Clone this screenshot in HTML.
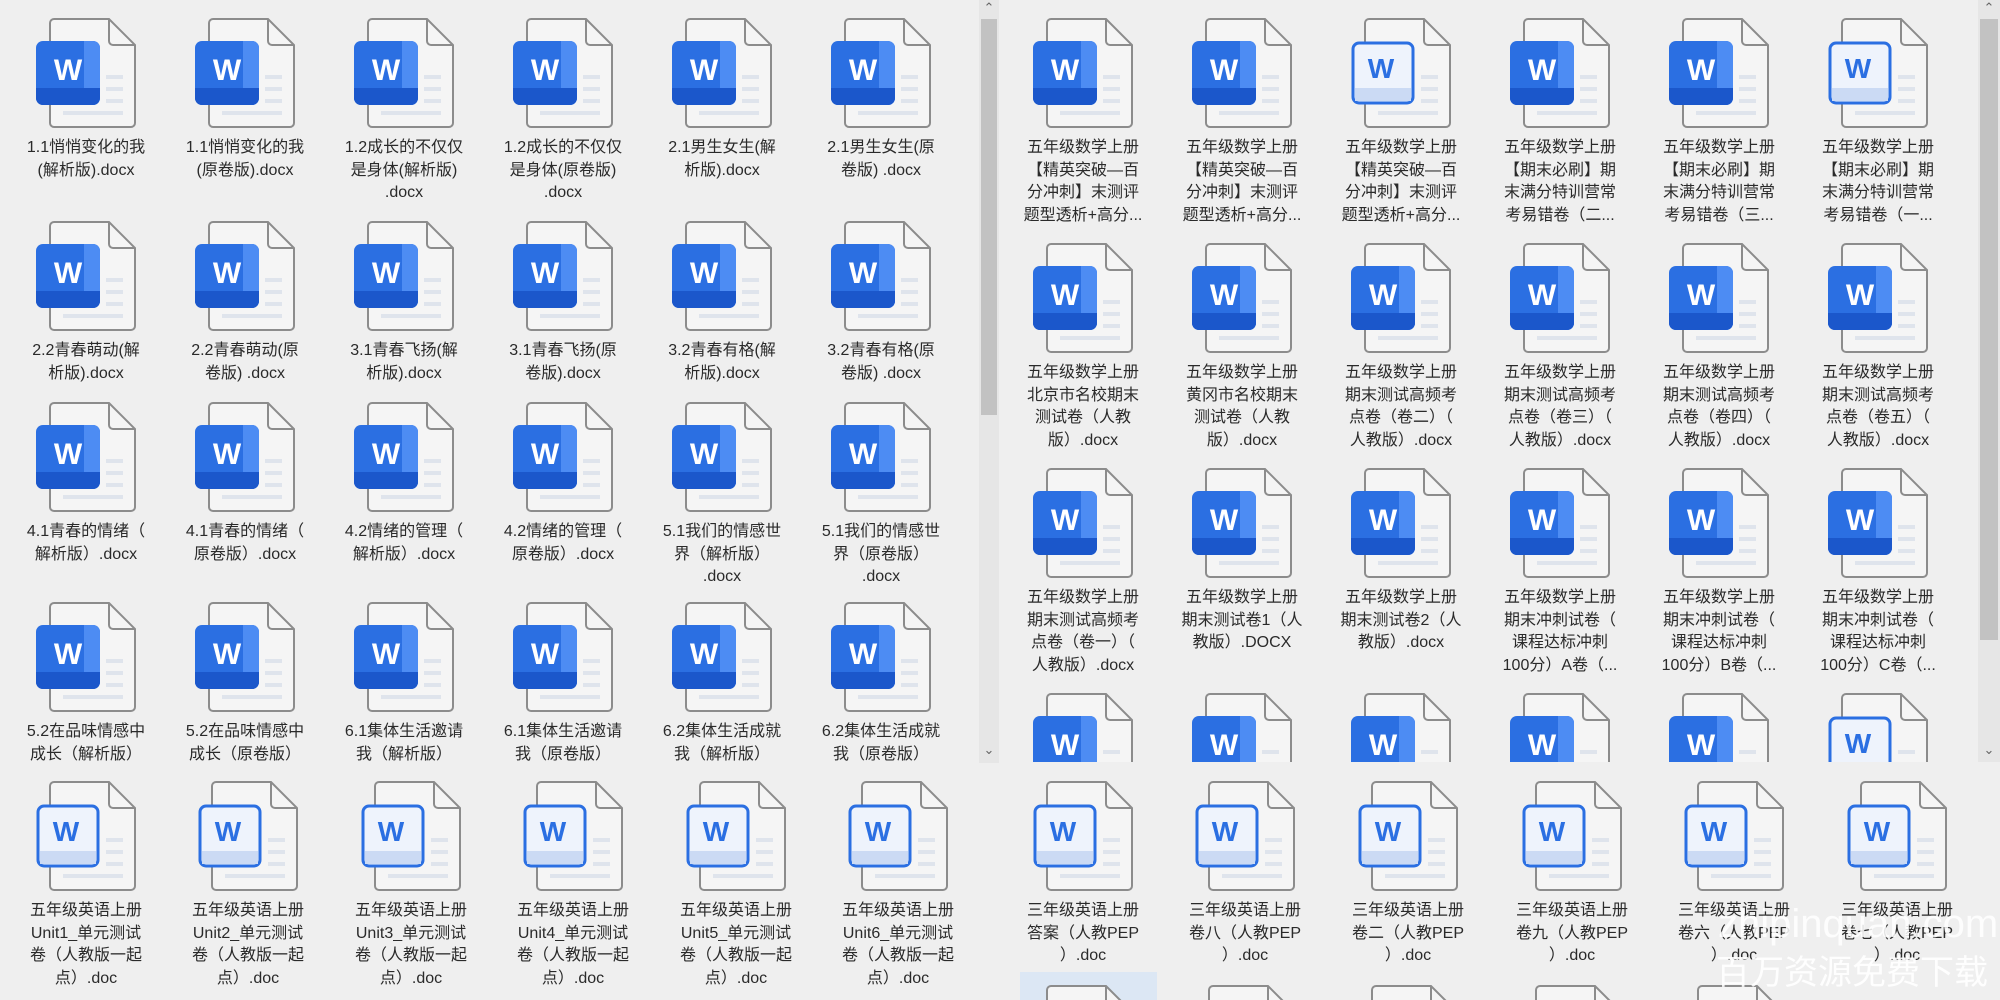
<!DOCTYPE html>
<html><head><meta charset="utf-8">
<style>
*{margin:0;padding:0;box-sizing:border-box}
html,body{width:2000px;height:1000px;overflow:hidden;background:#efefef;font-family:"Liberation Sans","Noto Sans CJK SC",sans-serif}
.c{position:absolute;overflow:hidden;background:#efefef}
.it{position:absolute;width:156px;height:230px}
.it svg{position:absolute;left:28px;top:0;width:100px;height:110px}
.t{position:absolute;left:-4px;top:119px;width:164px;text-align:center;font-size:16px;line-height:22.5px;color:#2a2a2a;white-space:nowrap}
.sb{position:absolute;background:#e6e6e6}
.th{position:absolute;background:#c2c2c2}
.ar{position:absolute;font-size:13px;color:#666;width:20px;text-align:center}
</style></head><body>
<svg width="0" height="0" style="position:absolute">
<defs>
<symbol id="pg" viewBox="0 0 100 110">
<path d="M18 1H73L99 27V105a4 4 0 0 1-4 4H18a4 4 0 0 1-4-4V5a4 4 0 0 1 4-4z" fill="#f5f5f5" stroke="#8c8c8c" stroke-width="2"/>
<path d="M73 1V23a4 4 0 0 0 4 4H99" fill="none" stroke="#8c8c8c" stroke-width="2"/>
<rect x="70" y="57" width="17" height="4" fill="#dfe4ec"/>
<rect x="70" y="69" width="17" height="4" fill="#dfe4ec"/>
<rect x="70" y="81" width="17" height="4" fill="#dfe4ec"/>
<rect x="27" y="93" width="60" height="4" fill="#dfe4ec"/>
</symbol>
<clipPath id="cl"><rect x="0" y="23" width="64" height="64" rx="7"/></clipPath>
</defs></svg>

<!-- top-left -->
<div class="c" style="left:0;top:0;width:979px;height:763px">
<div class="it" style="left:8px;top:18px"><svg><use href="#pg"/><g clip-path="url(#cl)"><rect x="0" y="23" width="64" height="64" fill="#2b6fe2"/><rect x="48" y="23" width="16" height="64" fill="#4d8cf3"/><rect x="0" y="70" width="64" height="17" fill="#1b57cb"/></g><text x="32" y="62" font-size="30" font-weight="bold" fill="#fff" text-anchor="middle" font-family="Liberation Sans">W</text></svg><div class="t">1.1悄悄变化的我<br>(解析版).docx</div></div>
<div class="it" style="left:167px;top:18px"><svg><use href="#pg"/><g clip-path="url(#cl)"><rect x="0" y="23" width="64" height="64" fill="#2b6fe2"/><rect x="48" y="23" width="16" height="64" fill="#4d8cf3"/><rect x="0" y="70" width="64" height="17" fill="#1b57cb"/></g><text x="32" y="62" font-size="30" font-weight="bold" fill="#fff" text-anchor="middle" font-family="Liberation Sans">W</text></svg><div class="t">1.1悄悄变化的我<br>(原卷版).docx</div></div>
<div class="it" style="left:326px;top:18px"><svg><use href="#pg"/><g clip-path="url(#cl)"><rect x="0" y="23" width="64" height="64" fill="#2b6fe2"/><rect x="48" y="23" width="16" height="64" fill="#4d8cf3"/><rect x="0" y="70" width="64" height="17" fill="#1b57cb"/></g><text x="32" y="62" font-size="30" font-weight="bold" fill="#fff" text-anchor="middle" font-family="Liberation Sans">W</text></svg><div class="t">1.2成长的不仅仅<br>是身体(解析版)<br>.docx</div></div>
<div class="it" style="left:485px;top:18px"><svg><use href="#pg"/><g clip-path="url(#cl)"><rect x="0" y="23" width="64" height="64" fill="#2b6fe2"/><rect x="48" y="23" width="16" height="64" fill="#4d8cf3"/><rect x="0" y="70" width="64" height="17" fill="#1b57cb"/></g><text x="32" y="62" font-size="30" font-weight="bold" fill="#fff" text-anchor="middle" font-family="Liberation Sans">W</text></svg><div class="t">1.2成长的不仅仅<br>是身体(原卷版)<br>.docx</div></div>
<div class="it" style="left:644px;top:18px"><svg><use href="#pg"/><g clip-path="url(#cl)"><rect x="0" y="23" width="64" height="64" fill="#2b6fe2"/><rect x="48" y="23" width="16" height="64" fill="#4d8cf3"/><rect x="0" y="70" width="64" height="17" fill="#1b57cb"/></g><text x="32" y="62" font-size="30" font-weight="bold" fill="#fff" text-anchor="middle" font-family="Liberation Sans">W</text></svg><div class="t">2.1男生女生(解<br>析版).docx</div></div>
<div class="it" style="left:803px;top:18px"><svg><use href="#pg"/><g clip-path="url(#cl)"><rect x="0" y="23" width="64" height="64" fill="#2b6fe2"/><rect x="48" y="23" width="16" height="64" fill="#4d8cf3"/><rect x="0" y="70" width="64" height="17" fill="#1b57cb"/></g><text x="32" y="62" font-size="30" font-weight="bold" fill="#fff" text-anchor="middle" font-family="Liberation Sans">W</text></svg><div class="t">2.1男生女生(原<br>卷版) .docx</div></div>

<div class="it" style="left:8px;top:221px"><svg><use href="#pg"/><g clip-path="url(#cl)"><rect x="0" y="23" width="64" height="64" fill="#2b6fe2"/><rect x="48" y="23" width="16" height="64" fill="#4d8cf3"/><rect x="0" y="70" width="64" height="17" fill="#1b57cb"/></g><text x="32" y="62" font-size="30" font-weight="bold" fill="#fff" text-anchor="middle" font-family="Liberation Sans">W</text></svg><div class="t">2.2青春萌动(解<br>析版).docx</div></div>
<div class="it" style="left:167px;top:221px"><svg><use href="#pg"/><g clip-path="url(#cl)"><rect x="0" y="23" width="64" height="64" fill="#2b6fe2"/><rect x="48" y="23" width="16" height="64" fill="#4d8cf3"/><rect x="0" y="70" width="64" height="17" fill="#1b57cb"/></g><text x="32" y="62" font-size="30" font-weight="bold" fill="#fff" text-anchor="middle" font-family="Liberation Sans">W</text></svg><div class="t">2.2青春萌动(原<br>卷版) .docx</div></div>
<div class="it" style="left:326px;top:221px"><svg><use href="#pg"/><g clip-path="url(#cl)"><rect x="0" y="23" width="64" height="64" fill="#2b6fe2"/><rect x="48" y="23" width="16" height="64" fill="#4d8cf3"/><rect x="0" y="70" width="64" height="17" fill="#1b57cb"/></g><text x="32" y="62" font-size="30" font-weight="bold" fill="#fff" text-anchor="middle" font-family="Liberation Sans">W</text></svg><div class="t">3.1青春飞扬(解<br>析版).docx</div></div>
<div class="it" style="left:485px;top:221px"><svg><use href="#pg"/><g clip-path="url(#cl)"><rect x="0" y="23" width="64" height="64" fill="#2b6fe2"/><rect x="48" y="23" width="16" height="64" fill="#4d8cf3"/><rect x="0" y="70" width="64" height="17" fill="#1b57cb"/></g><text x="32" y="62" font-size="30" font-weight="bold" fill="#fff" text-anchor="middle" font-family="Liberation Sans">W</text></svg><div class="t">3.1青春飞扬(原<br>卷版).docx</div></div>
<div class="it" style="left:644px;top:221px"><svg><use href="#pg"/><g clip-path="url(#cl)"><rect x="0" y="23" width="64" height="64" fill="#2b6fe2"/><rect x="48" y="23" width="16" height="64" fill="#4d8cf3"/><rect x="0" y="70" width="64" height="17" fill="#1b57cb"/></g><text x="32" y="62" font-size="30" font-weight="bold" fill="#fff" text-anchor="middle" font-family="Liberation Sans">W</text></svg><div class="t">3.2青春有格(解<br>析版).docx</div></div>
<div class="it" style="left:803px;top:221px"><svg><use href="#pg"/><g clip-path="url(#cl)"><rect x="0" y="23" width="64" height="64" fill="#2b6fe2"/><rect x="48" y="23" width="16" height="64" fill="#4d8cf3"/><rect x="0" y="70" width="64" height="17" fill="#1b57cb"/></g><text x="32" y="62" font-size="30" font-weight="bold" fill="#fff" text-anchor="middle" font-family="Liberation Sans">W</text></svg><div class="t">3.2青春有格(原<br>卷版) .docx</div></div>

<div class="it" style="left:8px;top:402px"><svg><use href="#pg"/><g clip-path="url(#cl)"><rect x="0" y="23" width="64" height="64" fill="#2b6fe2"/><rect x="48" y="23" width="16" height="64" fill="#4d8cf3"/><rect x="0" y="70" width="64" height="17" fill="#1b57cb"/></g><text x="32" y="62" font-size="30" font-weight="bold" fill="#fff" text-anchor="middle" font-family="Liberation Sans">W</text></svg><div class="t">4.1青春的情绪（<br>解析版）.docx</div></div>
<div class="it" style="left:167px;top:402px"><svg><use href="#pg"/><g clip-path="url(#cl)"><rect x="0" y="23" width="64" height="64" fill="#2b6fe2"/><rect x="48" y="23" width="16" height="64" fill="#4d8cf3"/><rect x="0" y="70" width="64" height="17" fill="#1b57cb"/></g><text x="32" y="62" font-size="30" font-weight="bold" fill="#fff" text-anchor="middle" font-family="Liberation Sans">W</text></svg><div class="t">4.1青春的情绪（<br>原卷版）.docx</div></div>
<div class="it" style="left:326px;top:402px"><svg><use href="#pg"/><g clip-path="url(#cl)"><rect x="0" y="23" width="64" height="64" fill="#2b6fe2"/><rect x="48" y="23" width="16" height="64" fill="#4d8cf3"/><rect x="0" y="70" width="64" height="17" fill="#1b57cb"/></g><text x="32" y="62" font-size="30" font-weight="bold" fill="#fff" text-anchor="middle" font-family="Liberation Sans">W</text></svg><div class="t">4.2情绪的管理（<br>解析版）.docx</div></div>
<div class="it" style="left:485px;top:402px"><svg><use href="#pg"/><g clip-path="url(#cl)"><rect x="0" y="23" width="64" height="64" fill="#2b6fe2"/><rect x="48" y="23" width="16" height="64" fill="#4d8cf3"/><rect x="0" y="70" width="64" height="17" fill="#1b57cb"/></g><text x="32" y="62" font-size="30" font-weight="bold" fill="#fff" text-anchor="middle" font-family="Liberation Sans">W</text></svg><div class="t">4.2情绪的管理（<br>原卷版）.docx</div></div>
<div class="it" style="left:644px;top:402px"><svg><use href="#pg"/><g clip-path="url(#cl)"><rect x="0" y="23" width="64" height="64" fill="#2b6fe2"/><rect x="48" y="23" width="16" height="64" fill="#4d8cf3"/><rect x="0" y="70" width="64" height="17" fill="#1b57cb"/></g><text x="32" y="62" font-size="30" font-weight="bold" fill="#fff" text-anchor="middle" font-family="Liberation Sans">W</text></svg><div class="t">5.1我们的情感世<br>界（解析版）<br>.docx</div></div>
<div class="it" style="left:803px;top:402px"><svg><use href="#pg"/><g clip-path="url(#cl)"><rect x="0" y="23" width="64" height="64" fill="#2b6fe2"/><rect x="48" y="23" width="16" height="64" fill="#4d8cf3"/><rect x="0" y="70" width="64" height="17" fill="#1b57cb"/></g><text x="32" y="62" font-size="30" font-weight="bold" fill="#fff" text-anchor="middle" font-family="Liberation Sans">W</text></svg><div class="t">5.1我们的情感世<br>界（原卷版）<br>.docx</div></div>

<div class="it" style="left:8px;top:602px"><svg><use href="#pg"/><g clip-path="url(#cl)"><rect x="0" y="23" width="64" height="64" fill="#2b6fe2"/><rect x="48" y="23" width="16" height="64" fill="#4d8cf3"/><rect x="0" y="70" width="64" height="17" fill="#1b57cb"/></g><text x="32" y="62" font-size="30" font-weight="bold" fill="#fff" text-anchor="middle" font-family="Liberation Sans">W</text></svg><div class="t">5.2在品味情感中<br>成长（解析版）</div></div>
<div class="it" style="left:167px;top:602px"><svg><use href="#pg"/><g clip-path="url(#cl)"><rect x="0" y="23" width="64" height="64" fill="#2b6fe2"/><rect x="48" y="23" width="16" height="64" fill="#4d8cf3"/><rect x="0" y="70" width="64" height="17" fill="#1b57cb"/></g><text x="32" y="62" font-size="30" font-weight="bold" fill="#fff" text-anchor="middle" font-family="Liberation Sans">W</text></svg><div class="t">5.2在品味情感中<br>成长（原卷版）</div></div>
<div class="it" style="left:326px;top:602px"><svg><use href="#pg"/><g clip-path="url(#cl)"><rect x="0" y="23" width="64" height="64" fill="#2b6fe2"/><rect x="48" y="23" width="16" height="64" fill="#4d8cf3"/><rect x="0" y="70" width="64" height="17" fill="#1b57cb"/></g><text x="32" y="62" font-size="30" font-weight="bold" fill="#fff" text-anchor="middle" font-family="Liberation Sans">W</text></svg><div class="t">6.1集体生活邀请<br>我（解析版）</div></div>
<div class="it" style="left:485px;top:602px"><svg><use href="#pg"/><g clip-path="url(#cl)"><rect x="0" y="23" width="64" height="64" fill="#2b6fe2"/><rect x="48" y="23" width="16" height="64" fill="#4d8cf3"/><rect x="0" y="70" width="64" height="17" fill="#1b57cb"/></g><text x="32" y="62" font-size="30" font-weight="bold" fill="#fff" text-anchor="middle" font-family="Liberation Sans">W</text></svg><div class="t">6.1集体生活邀请<br>我（原卷版）</div></div>
<div class="it" style="left:644px;top:602px"><svg><use href="#pg"/><g clip-path="url(#cl)"><rect x="0" y="23" width="64" height="64" fill="#2b6fe2"/><rect x="48" y="23" width="16" height="64" fill="#4d8cf3"/><rect x="0" y="70" width="64" height="17" fill="#1b57cb"/></g><text x="32" y="62" font-size="30" font-weight="bold" fill="#fff" text-anchor="middle" font-family="Liberation Sans">W</text></svg><div class="t">6.2集体生活成就<br>我（解析版）</div></div>
<div class="it" style="left:803px;top:602px"><svg><use href="#pg"/><g clip-path="url(#cl)"><rect x="0" y="23" width="64" height="64" fill="#2b6fe2"/><rect x="48" y="23" width="16" height="64" fill="#4d8cf3"/><rect x="0" y="70" width="64" height="17" fill="#1b57cb"/></g><text x="32" y="62" font-size="30" font-weight="bold" fill="#fff" text-anchor="middle" font-family="Liberation Sans">W</text></svg><div class="t">6.2集体生活成就<br>我（原卷版）</div></div>
</div>
<div class="sb" style="left:979px;top:0;width:20px;height:763px"></div>
<div class="th" style="left:981px;top:19px;width:16px;height:396px"></div>
<div class="ar" style="left:979px;top:0">&#8963;</div>
<div class="ar" style="left:979px;top:742px">&#8964;</div>

<!-- top-right -->
<div class="c" style="left:1000px;top:0;width:978px;height:762px">
<div class="it" style="left:5px;top:18px"><svg><use href="#pg"/><g clip-path="url(#cl)"><rect x="0" y="23" width="64" height="64" fill="#2b6fe2"/><rect x="48" y="23" width="16" height="64" fill="#4d8cf3"/><rect x="0" y="70" width="64" height="17" fill="#1b57cb"/></g><text x="32" y="62" font-size="30" font-weight="bold" fill="#fff" text-anchor="middle" font-family="Liberation Sans">W</text></svg><div class="t">五年级数学上册<br>【精英突破—百<br>分冲刺】末测评<br>题型透析+高分...</div></div>
<div class="it" style="left:164px;top:18px"><svg><use href="#pg"/><g clip-path="url(#cl)"><rect x="0" y="23" width="64" height="64" fill="#2b6fe2"/><rect x="48" y="23" width="16" height="64" fill="#4d8cf3"/><rect x="0" y="70" width="64" height="17" fill="#1b57cb"/></g><text x="32" y="62" font-size="30" font-weight="bold" fill="#fff" text-anchor="middle" font-family="Liberation Sans">W</text></svg><div class="t">五年级数学上册<br>【精英突破—百<br>分冲刺】末测评<br>题型透析+高分...</div></div>
<div class="it" style="left:323px;top:18px"><svg><use href="#pg"/><rect x="2" y="25" width="60" height="60" rx="6" fill="#eef3fc" stroke="#2b6fe2" stroke-width="3"/><rect x="4" y="70" width="56" height="13" fill="#cbdaf4"/><text x="30" y="60" font-size="28" font-weight="bold" fill="#2b6fe2" text-anchor="middle" font-family="Liberation Sans">W</text></svg><div class="t">五年级数学上册<br>【精英突破—百<br>分冲刺】末测评<br>题型透析+高分...</div></div>
<div class="it" style="left:482px;top:18px"><svg><use href="#pg"/><g clip-path="url(#cl)"><rect x="0" y="23" width="64" height="64" fill="#2b6fe2"/><rect x="48" y="23" width="16" height="64" fill="#4d8cf3"/><rect x="0" y="70" width="64" height="17" fill="#1b57cb"/></g><text x="32" y="62" font-size="30" font-weight="bold" fill="#fff" text-anchor="middle" font-family="Liberation Sans">W</text></svg><div class="t">五年级数学上册<br>【期末必刷】期<br>末满分特训营常<br>考易错卷（二...</div></div>
<div class="it" style="left:641px;top:18px"><svg><use href="#pg"/><g clip-path="url(#cl)"><rect x="0" y="23" width="64" height="64" fill="#2b6fe2"/><rect x="48" y="23" width="16" height="64" fill="#4d8cf3"/><rect x="0" y="70" width="64" height="17" fill="#1b57cb"/></g><text x="32" y="62" font-size="30" font-weight="bold" fill="#fff" text-anchor="middle" font-family="Liberation Sans">W</text></svg><div class="t">五年级数学上册<br>【期末必刷】期<br>末满分特训营常<br>考易错卷（三...</div></div>
<div class="it" style="left:800px;top:18px"><svg><use href="#pg"/><rect x="2" y="25" width="60" height="60" rx="6" fill="#eef3fc" stroke="#2b6fe2" stroke-width="3"/><rect x="4" y="70" width="56" height="13" fill="#cbdaf4"/><text x="30" y="60" font-size="28" font-weight="bold" fill="#2b6fe2" text-anchor="middle" font-family="Liberation Sans">W</text></svg><div class="t">五年级数学上册<br>【期末必刷】期<br>末满分特训营常<br>考易错卷（一...</div></div>

<div class="it" style="left:5px;top:243px"><svg><use href="#pg"/><g clip-path="url(#cl)"><rect x="0" y="23" width="64" height="64" fill="#2b6fe2"/><rect x="48" y="23" width="16" height="64" fill="#4d8cf3"/><rect x="0" y="70" width="64" height="17" fill="#1b57cb"/></g><text x="32" y="62" font-size="30" font-weight="bold" fill="#fff" text-anchor="middle" font-family="Liberation Sans">W</text></svg><div class="t">五年级数学上册<br>北京市名校期末<br>测试卷（人教<br>版）.docx</div></div>
<div class="it" style="left:164px;top:243px"><svg><use href="#pg"/><g clip-path="url(#cl)"><rect x="0" y="23" width="64" height="64" fill="#2b6fe2"/><rect x="48" y="23" width="16" height="64" fill="#4d8cf3"/><rect x="0" y="70" width="64" height="17" fill="#1b57cb"/></g><text x="32" y="62" font-size="30" font-weight="bold" fill="#fff" text-anchor="middle" font-family="Liberation Sans">W</text></svg><div class="t">五年级数学上册<br>黄冈市名校期末<br>测试卷（人教<br>版）.docx</div></div>
<div class="it" style="left:323px;top:243px"><svg><use href="#pg"/><g clip-path="url(#cl)"><rect x="0" y="23" width="64" height="64" fill="#2b6fe2"/><rect x="48" y="23" width="16" height="64" fill="#4d8cf3"/><rect x="0" y="70" width="64" height="17" fill="#1b57cb"/></g><text x="32" y="62" font-size="30" font-weight="bold" fill="#fff" text-anchor="middle" font-family="Liberation Sans">W</text></svg><div class="t">五年级数学上册<br>期末测试高频考<br>点卷（卷二）（<br>人教版）.docx</div></div>
<div class="it" style="left:482px;top:243px"><svg><use href="#pg"/><g clip-path="url(#cl)"><rect x="0" y="23" width="64" height="64" fill="#2b6fe2"/><rect x="48" y="23" width="16" height="64" fill="#4d8cf3"/><rect x="0" y="70" width="64" height="17" fill="#1b57cb"/></g><text x="32" y="62" font-size="30" font-weight="bold" fill="#fff" text-anchor="middle" font-family="Liberation Sans">W</text></svg><div class="t">五年级数学上册<br>期末测试高频考<br>点卷（卷三）（<br>人教版）.docx</div></div>
<div class="it" style="left:641px;top:243px"><svg><use href="#pg"/><g clip-path="url(#cl)"><rect x="0" y="23" width="64" height="64" fill="#2b6fe2"/><rect x="48" y="23" width="16" height="64" fill="#4d8cf3"/><rect x="0" y="70" width="64" height="17" fill="#1b57cb"/></g><text x="32" y="62" font-size="30" font-weight="bold" fill="#fff" text-anchor="middle" font-family="Liberation Sans">W</text></svg><div class="t">五年级数学上册<br>期末测试高频考<br>点卷（卷四）（<br>人教版）.docx</div></div>
<div class="it" style="left:800px;top:243px"><svg><use href="#pg"/><g clip-path="url(#cl)"><rect x="0" y="23" width="64" height="64" fill="#2b6fe2"/><rect x="48" y="23" width="16" height="64" fill="#4d8cf3"/><rect x="0" y="70" width="64" height="17" fill="#1b57cb"/></g><text x="32" y="62" font-size="30" font-weight="bold" fill="#fff" text-anchor="middle" font-family="Liberation Sans">W</text></svg><div class="t">五年级数学上册<br>期末测试高频考<br>点卷（卷五）（<br>人教版）.docx</div></div>

<div class="it" style="left:5px;top:468px"><svg><use href="#pg"/><g clip-path="url(#cl)"><rect x="0" y="23" width="64" height="64" fill="#2b6fe2"/><rect x="48" y="23" width="16" height="64" fill="#4d8cf3"/><rect x="0" y="70" width="64" height="17" fill="#1b57cb"/></g><text x="32" y="62" font-size="30" font-weight="bold" fill="#fff" text-anchor="middle" font-family="Liberation Sans">W</text></svg><div class="t">五年级数学上册<br>期末测试高频考<br>点卷（卷一）（<br>人教版）.docx</div></div>
<div class="it" style="left:164px;top:468px"><svg><use href="#pg"/><g clip-path="url(#cl)"><rect x="0" y="23" width="64" height="64" fill="#2b6fe2"/><rect x="48" y="23" width="16" height="64" fill="#4d8cf3"/><rect x="0" y="70" width="64" height="17" fill="#1b57cb"/></g><text x="32" y="62" font-size="30" font-weight="bold" fill="#fff" text-anchor="middle" font-family="Liberation Sans">W</text></svg><div class="t">五年级数学上册<br>期末测试卷1（人<br>教版）.DOCX</div></div>
<div class="it" style="left:323px;top:468px"><svg><use href="#pg"/><g clip-path="url(#cl)"><rect x="0" y="23" width="64" height="64" fill="#2b6fe2"/><rect x="48" y="23" width="16" height="64" fill="#4d8cf3"/><rect x="0" y="70" width="64" height="17" fill="#1b57cb"/></g><text x="32" y="62" font-size="30" font-weight="bold" fill="#fff" text-anchor="middle" font-family="Liberation Sans">W</text></svg><div class="t">五年级数学上册<br>期末测试卷2（人<br>教版）.docx</div></div>
<div class="it" style="left:482px;top:468px"><svg><use href="#pg"/><g clip-path="url(#cl)"><rect x="0" y="23" width="64" height="64" fill="#2b6fe2"/><rect x="48" y="23" width="16" height="64" fill="#4d8cf3"/><rect x="0" y="70" width="64" height="17" fill="#1b57cb"/></g><text x="32" y="62" font-size="30" font-weight="bold" fill="#fff" text-anchor="middle" font-family="Liberation Sans">W</text></svg><div class="t">五年级数学上册<br>期末冲刺试卷（<br>课程达标冲刺<br>100分）A卷（...</div></div>
<div class="it" style="left:641px;top:468px"><svg><use href="#pg"/><g clip-path="url(#cl)"><rect x="0" y="23" width="64" height="64" fill="#2b6fe2"/><rect x="48" y="23" width="16" height="64" fill="#4d8cf3"/><rect x="0" y="70" width="64" height="17" fill="#1b57cb"/></g><text x="32" y="62" font-size="30" font-weight="bold" fill="#fff" text-anchor="middle" font-family="Liberation Sans">W</text></svg><div class="t">五年级数学上册<br>期末冲刺试卷（<br>课程达标冲刺<br>100分）B卷（...</div></div>
<div class="it" style="left:800px;top:468px"><svg><use href="#pg"/><g clip-path="url(#cl)"><rect x="0" y="23" width="64" height="64" fill="#2b6fe2"/><rect x="48" y="23" width="16" height="64" fill="#4d8cf3"/><rect x="0" y="70" width="64" height="17" fill="#1b57cb"/></g><text x="32" y="62" font-size="30" font-weight="bold" fill="#fff" text-anchor="middle" font-family="Liberation Sans">W</text></svg><div class="t">五年级数学上册<br>期末冲刺试卷（<br>课程达标冲刺<br>100分）C卷（...</div></div>

<div class="it" style="left:5px;top:693px"><svg><use href="#pg"/><g clip-path="url(#cl)"><rect x="0" y="23" width="64" height="64" fill="#2b6fe2"/><rect x="48" y="23" width="16" height="64" fill="#4d8cf3"/><rect x="0" y="70" width="64" height="17" fill="#1b57cb"/></g><text x="32" y="62" font-size="30" font-weight="bold" fill="#fff" text-anchor="middle" font-family="Liberation Sans">W</text></svg></div>
<div class="it" style="left:164px;top:693px"><svg><use href="#pg"/><g clip-path="url(#cl)"><rect x="0" y="23" width="64" height="64" fill="#2b6fe2"/><rect x="48" y="23" width="16" height="64" fill="#4d8cf3"/><rect x="0" y="70" width="64" height="17" fill="#1b57cb"/></g><text x="32" y="62" font-size="30" font-weight="bold" fill="#fff" text-anchor="middle" font-family="Liberation Sans">W</text></svg></div>
<div class="it" style="left:323px;top:693px"><svg><use href="#pg"/><g clip-path="url(#cl)"><rect x="0" y="23" width="64" height="64" fill="#2b6fe2"/><rect x="48" y="23" width="16" height="64" fill="#4d8cf3"/><rect x="0" y="70" width="64" height="17" fill="#1b57cb"/></g><text x="32" y="62" font-size="30" font-weight="bold" fill="#fff" text-anchor="middle" font-family="Liberation Sans">W</text></svg></div>
<div class="it" style="left:482px;top:693px"><svg><use href="#pg"/><g clip-path="url(#cl)"><rect x="0" y="23" width="64" height="64" fill="#2b6fe2"/><rect x="48" y="23" width="16" height="64" fill="#4d8cf3"/><rect x="0" y="70" width="64" height="17" fill="#1b57cb"/></g><text x="32" y="62" font-size="30" font-weight="bold" fill="#fff" text-anchor="middle" font-family="Liberation Sans">W</text></svg></div>
<div class="it" style="left:641px;top:693px"><svg><use href="#pg"/><g clip-path="url(#cl)"><rect x="0" y="23" width="64" height="64" fill="#2b6fe2"/><rect x="48" y="23" width="16" height="64" fill="#4d8cf3"/><rect x="0" y="70" width="64" height="17" fill="#1b57cb"/></g><text x="32" y="62" font-size="30" font-weight="bold" fill="#fff" text-anchor="middle" font-family="Liberation Sans">W</text></svg></div>
<div class="it" style="left:800px;top:693px"><svg><use href="#pg"/><rect x="2" y="25" width="60" height="60" rx="6" fill="#eef3fc" stroke="#2b6fe2" stroke-width="3"/><rect x="4" y="70" width="56" height="13" fill="#cbdaf4"/><text x="30" y="60" font-size="28" font-weight="bold" fill="#2b6fe2" text-anchor="middle" font-family="Liberation Sans">W</text></svg></div>
</div>
<div class="sb" style="left:1978px;top:0;width:22px;height:762px"></div>
<div class="th" style="left:1980px;top:19px;width:18px;height:621px"></div>
<div class="ar" style="left:1979px;top:0">&#8963;</div>
<div class="ar" style="left:1979px;top:742px">&#8964;</div>

<!-- bottom-left -->
<div class="c" style="left:0;top:765px;width:1008px;height:235px">
<div class="it" style="left:8px;top:16px"><svg><use href="#pg"/><rect x="2" y="25" width="60" height="60" rx="6" fill="#eef3fc" stroke="#2b6fe2" stroke-width="3"/><rect x="4" y="70" width="56" height="13" fill="#cbdaf4"/><text x="30" y="60" font-size="28" font-weight="bold" fill="#2b6fe2" text-anchor="middle" font-family="Liberation Sans">W</text></svg><div class="t">五年级英语上册<br>Unit1_单元测试<br>卷（人教版一起<br>点）.doc</div></div>
<div class="it" style="left:170px;top:16px"><svg><use href="#pg"/><rect x="2" y="25" width="60" height="60" rx="6" fill="#eef3fc" stroke="#2b6fe2" stroke-width="3"/><rect x="4" y="70" width="56" height="13" fill="#cbdaf4"/><text x="30" y="60" font-size="28" font-weight="bold" fill="#2b6fe2" text-anchor="middle" font-family="Liberation Sans">W</text></svg><div class="t">五年级英语上册<br>Unit2_单元测试<br>卷（人教版一起<br>点）.doc</div></div>
<div class="it" style="left:333px;top:16px"><svg><use href="#pg"/><rect x="2" y="25" width="60" height="60" rx="6" fill="#eef3fc" stroke="#2b6fe2" stroke-width="3"/><rect x="4" y="70" width="56" height="13" fill="#cbdaf4"/><text x="30" y="60" font-size="28" font-weight="bold" fill="#2b6fe2" text-anchor="middle" font-family="Liberation Sans">W</text></svg><div class="t">五年级英语上册<br>Unit3_单元测试<br>卷（人教版一起<br>点）.doc</div></div>
<div class="it" style="left:495px;top:16px"><svg><use href="#pg"/><rect x="2" y="25" width="60" height="60" rx="6" fill="#eef3fc" stroke="#2b6fe2" stroke-width="3"/><rect x="4" y="70" width="56" height="13" fill="#cbdaf4"/><text x="30" y="60" font-size="28" font-weight="bold" fill="#2b6fe2" text-anchor="middle" font-family="Liberation Sans">W</text></svg><div class="t">五年级英语上册<br>Unit4_单元测试<br>卷（人教版一起<br>点）.doc</div></div>
<div class="it" style="left:658px;top:16px"><svg><use href="#pg"/><rect x="2" y="25" width="60" height="60" rx="6" fill="#eef3fc" stroke="#2b6fe2" stroke-width="3"/><rect x="4" y="70" width="56" height="13" fill="#cbdaf4"/><text x="30" y="60" font-size="28" font-weight="bold" fill="#2b6fe2" text-anchor="middle" font-family="Liberation Sans">W</text></svg><div class="t">五年级英语上册<br>Unit5_单元测试<br>卷（人教版一起<br>点）.doc</div></div>
<div class="it" style="left:820px;top:16px"><svg><use href="#pg"/><rect x="2" y="25" width="60" height="60" rx="6" fill="#eef3fc" stroke="#2b6fe2" stroke-width="3"/><rect x="4" y="70" width="56" height="13" fill="#cbdaf4"/><text x="30" y="60" font-size="28" font-weight="bold" fill="#2b6fe2" text-anchor="middle" font-family="Liberation Sans">W</text></svg><div class="t">五年级英语上册<br>Unit6_单元测试<br>卷（人教版一起<br>点）.doc</div></div>
</div>

<!-- bottom-right -->
<div class="c" style="left:1008px;top:765px;width:992px;height:235px">
<div style="position:absolute;left:12px;top:207px;width:137px;height:30px;background:#dce7f4"></div>
<div class="it" style="left:-3px;top:16px"><svg><use href="#pg"/><rect x="2" y="25" width="60" height="60" rx="6" fill="#eef3fc" stroke="#2b6fe2" stroke-width="3"/><rect x="4" y="70" width="56" height="13" fill="#cbdaf4"/><text x="30" y="60" font-size="28" font-weight="bold" fill="#2b6fe2" text-anchor="middle" font-family="Liberation Sans">W</text></svg><div class="t">三年级英语上册<br>答案（人教PEP<br>）.doc</div></div>
<div class="it" style="left:159px;top:16px"><svg><use href="#pg"/><rect x="2" y="25" width="60" height="60" rx="6" fill="#eef3fc" stroke="#2b6fe2" stroke-width="3"/><rect x="4" y="70" width="56" height="13" fill="#cbdaf4"/><text x="30" y="60" font-size="28" font-weight="bold" fill="#2b6fe2" text-anchor="middle" font-family="Liberation Sans">W</text></svg><div class="t">三年级英语上册<br>卷八（人教PEP<br>）.doc</div></div>
<div class="it" style="left:322px;top:16px"><svg><use href="#pg"/><rect x="2" y="25" width="60" height="60" rx="6" fill="#eef3fc" stroke="#2b6fe2" stroke-width="3"/><rect x="4" y="70" width="56" height="13" fill="#cbdaf4"/><text x="30" y="60" font-size="28" font-weight="bold" fill="#2b6fe2" text-anchor="middle" font-family="Liberation Sans">W</text></svg><div class="t">三年级英语上册<br>卷二（人教PEP<br>）.doc</div></div>
<div class="it" style="left:486px;top:16px"><svg><use href="#pg"/><rect x="2" y="25" width="60" height="60" rx="6" fill="#eef3fc" stroke="#2b6fe2" stroke-width="3"/><rect x="4" y="70" width="56" height="13" fill="#cbdaf4"/><text x="30" y="60" font-size="28" font-weight="bold" fill="#2b6fe2" text-anchor="middle" font-family="Liberation Sans">W</text></svg><div class="t">三年级英语上册<br>卷九（人教PEP<br>）.doc</div></div>
<div class="it" style="left:648px;top:16px"><svg><use href="#pg"/><rect x="2" y="25" width="60" height="60" rx="6" fill="#eef3fc" stroke="#2b6fe2" stroke-width="3"/><rect x="4" y="70" width="56" height="13" fill="#cbdaf4"/><text x="30" y="60" font-size="28" font-weight="bold" fill="#2b6fe2" text-anchor="middle" font-family="Liberation Sans">W</text></svg><div class="t">三年级英语上册<br>卷六（人教PEP<br>）.doc</div></div>
<div class="it" style="left:811px;top:16px"><svg><use href="#pg"/><rect x="2" y="25" width="60" height="60" rx="6" fill="#eef3fc" stroke="#2b6fe2" stroke-width="3"/><rect x="4" y="70" width="56" height="13" fill="#cbdaf4"/><text x="30" y="60" font-size="28" font-weight="bold" fill="#2b6fe2" text-anchor="middle" font-family="Liberation Sans">W</text></svg><div class="t">三年级英语上册<br>卷七（人教PEP<br>）.doc</div></div>
<div class="it" style="left:-3px;top:220px"><svg><use href="#pg"/></svg></div>
<div class="it" style="left:159px;top:220px"><svg><use href="#pg"/></svg></div>
<div class="it" style="left:322px;top:220px"><svg><use href="#pg"/></svg></div>
<div class="it" style="left:486px;top:220px"><svg><use href="#pg"/></svg></div>
<div class="it" style="left:648px;top:220px"><svg><use href="#pg"/></svg></div>
</div>

<!-- watermark -->
<div style="position:absolute;left:1718px;top:902px;width:280px;font-size:40px;line-height:44px;color:rgba(255,255,255,0.85);font-family:'Liberation Sans',sans-serif;white-space:nowrap">zhipinquan.com</div>
<div style="position:absolute;left:1716px;top:950px;width:284px;font-size:34px;line-height:46px;color:rgba(255,255,255,0.9);font-family:'Liberation Sans','Noto Sans CJK SC',sans-serif;white-space:nowrap;letter-spacing:0px">百万资源免费下载</div>
</body></html>
